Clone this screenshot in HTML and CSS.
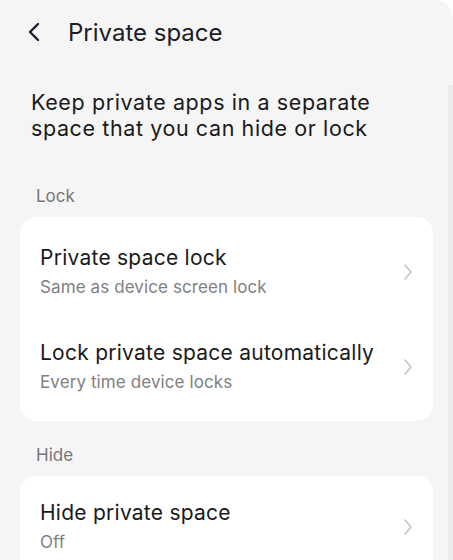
FILE: index.html
```html
<!DOCTYPE html>
<html lang="en">
<head>
  <meta charset="UTF-8">
  <meta name="viewport" content="width=device-width, initial-scale=1.0">
  <title>Private space</title>
  <link rel="stylesheet" href="styles.css">
</head>
<body>

  <div class="screen">
    <!-- Top bar with back arrow and title -->
    <div class="top-bar">
      <svg class="back" width="14" height="20" viewBox="0 0 14 20">
        <path d="M11 2 L3 10 L11 18" fill="none" stroke="#1c1c2a" stroke-width="2.4" stroke-linecap="round" stroke-linejoin="round"/>
      </svg>
      <h1 class="title">Private space</h1>
    </div>

    <p class="intro">Keep private apps in a separate space that you can hide or lock</p>

    <div class="section-label">Lock</div>
    <div class="card">
      <div class="row">
        <div class="row-text">
          <div class="row-title">Private space lock</div>
          <div class="row-sub">Same as device screen lock</div>
        </div>
        <svg class="chevron" width="10" height="18" viewBox="0 0 10 18">
          <path d="M2 2 L8 9 L2 16" fill="none" stroke="#c0c0d0" stroke-width="1.5" stroke-linecap="round" stroke-linejoin="round"/>
        </svg>
      </div>
      <div class="row">
        <div class="row-text">
          <div class="row-title">Lock private space automatically</div>
          <div class="row-sub">Every time device locks</div>
        </div>
        <svg class="chevron" width="10" height="18" viewBox="0 0 10 18">
          <path d="M2 2 L8 9 L2 16" fill="none" stroke="#c0c0d0" stroke-width="1.5" stroke-linecap="round" stroke-linejoin="round"/>
        </svg>
      </div>
    </div>

    <div class="section-label">Hide</div>
    <div class="card card-single">
      <div class="row">
        <div class="row-text">
          <div class="row-title">Hide private space</div>
          <div class="row-sub">Off</div>
        </div>
        <svg class="chevron" width="10" height="18" viewBox="0 0 10 18">
          <path d="M2 2 L8 9 L2 16" fill="none" stroke="#c0c0d0" stroke-width="1.5" stroke-linecap="round" stroke-linejoin="round"/>
        </svg>
      </div>
    </div>

    <!-- Scroll indicator on the right edge -->
    <div class="scrollbar"></div>
  </div>

</body>
</html>
```

FILE: styles.css
```css
html, body {
  margin: 0;
  background-color: #ffffff;
}

.screen {
  position: relative;
  min-height: 560px;
  background-color: #f5f5f5;
  border-top-right-radius: 18px;
  font-family: Inter, sans-serif;
  overflow: hidden;
}

/* Top bar */
.top-bar {
  display: flex;
  align-items: center;
  height: 64px;
  padding-left: 27px;
}

.back {
  margin-right: 27px;
}

.title {
  margin: 0;
  font-size: 24px;
  font-weight: 400;
  color: #1c1c2a;
}

/* Intro text */
.intro {
  margin: 25px 0 0 31px;
  width: 352px;
  font-size: 21.5px;
  line-height: 26px;
  letter-spacing: 0.6px;
  color: #1a1a1a;
}

.section-label {
  margin: 43px 0 0 36px;
  font-size: 17px;
  line-height: 24px;
  color: #777777;
}

.card {
  margin: 9px 20px 0 20px;
  background-color: #ffffff;
  border-radius: 16px;
  padding: 7px 0;
}

.card + .section-label {
  margin-top: 22px;
}

.card-single {
  padding-top: 3px;
}

.row {
  display: flex;
  align-items: center;
  height: 95px;
  padding: 0 20px;
  box-sizing: border-box;
}

.row-text {
  flex: 1;
}

.row-title {
  font-size: 21px;
  line-height: 28px;
  letter-spacing: 0.25px;
  color: #1a1a1a;
}

.row-sub {
  margin-top: 2px;
  font-size: 17px;
  line-height: 26px;
  letter-spacing: 0.1px;
  color: #808080;
}

.chevron {
  flex: none;
}

.scrollbar {
  position: absolute;
  right: 0;
  top: 85px;
  bottom: 0;
  width: 5px;
  background-color: #ebebeb;
}
```
